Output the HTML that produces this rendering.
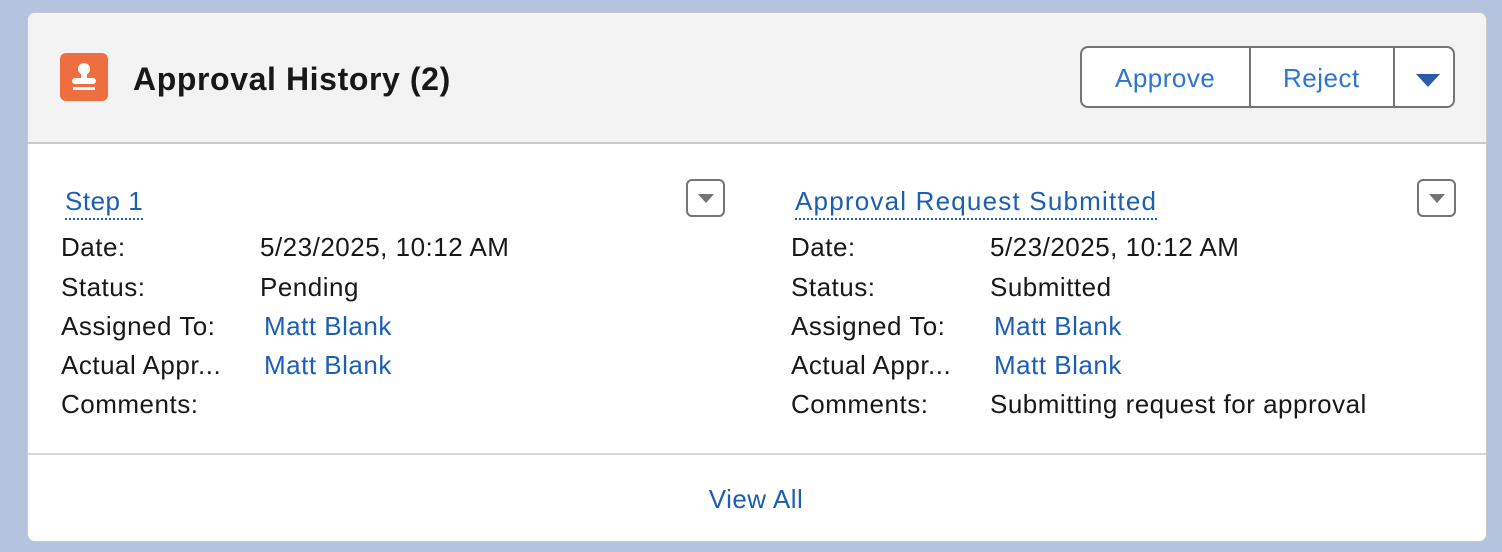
<!DOCTYPE html>
<html><head><style>
body{margin:0;width:1502px;height:552px;background:#b4c4de;font-family:"Liberation Sans",sans-serif;position:relative;overflow:hidden}
.card{position:absolute;left:27px;top:12px;width:1460px;height:530px;background:#fff;border:1px solid #c9c9c9;border-radius:8px;overflow:hidden;box-sizing:border-box}
.hdr{position:absolute;left:0;top:0;width:100%;height:129px;background:#f3f3f3;border-bottom:2px solid #c9c9c9}
.t{position:absolute;font-size:26px;letter-spacing:0.5px;color:#181818;white-space:nowrap;line-height:28px}
.l{color:#1b5eb5}
.ico{position:absolute;left:32px;top:40px;width:48px;height:48px;background:#ef6e40;border-radius:6px}
.btns{position:absolute;left:1052px;top:33px;width:375px;height:62px;border:2px solid #747474;border-radius:8px;background:#fff;box-sizing:border-box}
.sep{position:absolute;top:0;width:2px;height:100%;background:#747474}
.dd{position:absolute;width:39px;height:38px;border:2px solid #747474;border-radius:6px;box-sizing:border-box;background:#fff}
.dd:after{content:"";position:absolute;left:10px;top:13px;border-left:8px solid transparent;border-right:8px solid transparent;border-top:9px solid #747474}
.u{border-bottom:2px dotted #1b5eb5;padding-bottom:2px}
</style></head><body>
<div class="card">
<div class="hdr">
<div class="ico"><svg width="48" height="48" viewBox="0 0 48 48"><circle cx="24" cy="16" r="6" fill="#fff"/><rect x="21" y="18" width="6" height="8" fill="#fff"/><rect x="12" y="25" width="24" height="6" rx="3" fill="#fff"/><rect x="13" y="34" width="22" height="3" fill="#fff"/></svg></div>
<div class="t" style="left:105px;top:48px;font-size:32px;letter-spacing:0.6px;font-weight:bold;line-height:36px">Approval History (2)</div>
<div class="btns">
<div class="t" style="left:33px;top:16px;color:#2e74d1">Approve</div>
<div class="sep" style="left:167px"></div>
<div class="t" style="left:201px;top:16px;color:#2e74d1">Reject</div>
<div class="sep" style="left:311px"></div>
<div style="position:absolute;left:334px;top:26px;border-left:12px solid transparent;border-right:12px solid transparent;border-top:13px solid #2a5ca8"></div>
</div>
</div>
<div class="t l" style="left:37px;top:174px"><span class="u">Step 1</span></div>
<div class="dd" style="left:658px;top:166px"></div>
<div class="t l" style="left:767px;top:174px;letter-spacing:1.2px"><span class="u">Approval Request Submitted</span></div>
<div class="dd" style="left:1389px;top:166px"></div>

<div class="t" style="left:33px;top:220px">Date:</div><div class="t" style="left:232px;top:220px">5/23/2025, 10:12 AM</div>
<div class="t" style="left:33px;top:260px">Status:</div><div class="t" style="left:232px;top:260px">Pending</div>
<div class="t" style="left:33px;top:299px">Assigned To:</div><div class="t l" style="left:236px;top:299px">Matt Blank</div>
<div class="t" style="left:33px;top:338px">Actual Appr...</div><div class="t l" style="left:236px;top:338px">Matt Blank</div>
<div class="t" style="left:33px;top:377px">Comments:</div>

<div class="t" style="left:763px;top:220px">Date:</div><div class="t" style="left:962px;top:220px">5/23/2025, 10:12 AM</div>
<div class="t" style="left:763px;top:260px">Status:</div><div class="t" style="left:962px;top:260px">Submitted</div>
<div class="t" style="left:763px;top:299px">Assigned To:</div><div class="t l" style="left:966px;top:299px">Matt Blank</div>
<div class="t" style="left:763px;top:338px">Actual Appr...</div><div class="t l" style="left:966px;top:338px">Matt Blank</div>
<div class="t" style="left:763px;top:377px">Comments:</div><div class="t" style="left:962px;top:377px">Submitting request for approval</div>

<div style="position:absolute;left:0;top:440px;width:100%;height:2px;background:#d8d8d8"></div>
<div class="t l" style="left:0;width:100%;text-align:center;top:472px;padding-right:2px;box-sizing:border-box;">View All</div>
</div>
</body></html>
